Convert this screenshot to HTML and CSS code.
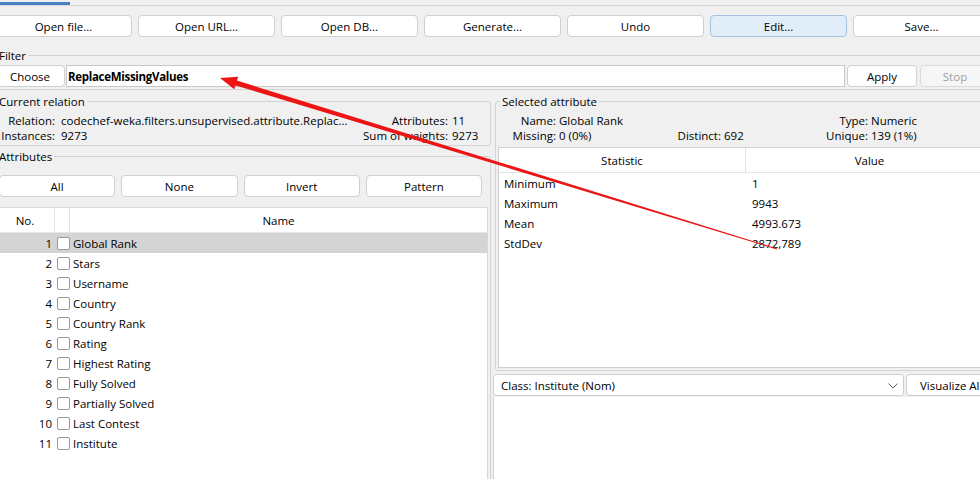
FILE: index.html
```html
<!DOCTYPE html>
<html>
<head>
<meta charset="utf-8">
<link rel="stylesheet" href="styles.css">
</head>
<body>
<div class="app">
  <div class="tabbar"><div class="tab-indicator"></div></div>
  <div class="toolbar">
    <button class="btn">Open file...</button>
    <button class="btn">Open URL...</button>
    <button class="btn">Open DB...</button>
    <button class="btn">Generate...</button>
    <button class="btn">Undo</button>
    <button class="btn btn-focus">Edit...</button>
    <button class="btn">Save...</button>
  </div>
  <fieldset class="group filter">
    <legend>Filter</legend>
    <div class="filter-row">
      <button class="btn choose">Choose</button>
      <div class="filter-field">ReplaceMissingValues</div>
      <button class="btn apply">Apply</button>
      <button class="btn stop">Stop</button>
    </div>
  </fieldset>
  <div class="main">
    <div class="left">
      <fieldset class="group relation">
        <legend>Current relation</legend>
        <div class="rel-grid">
          <span class="lbl">Relation:</span><span class="val">codechef-weka.filters.unsupervised.attribute.Replac...</span><span class="lbl">Attributes:</span><span class="val">11</span>
          <span class="lbl">Instances:</span><span class="val">9273</span><span class="lbl">Sum of weights:</span><span class="val">9273</span>
        </div>
      </fieldset>
      <fieldset class="group attributes">
        <legend>Attributes</legend>
        <div class="attr-buttons">
          <button class="btn">All</button>
          <button class="btn">None</button>
          <button class="btn">Invert</button>
          <button class="btn">Pattern</button>
        </div>
        <div class="attr-table">
          <div class="attr-head"><div class="h-no">No.</div><div class="h-chk"></div><div class="h-name">Name</div></div>
          <div class="attr-row selected"><div class="c-no">1</div><div class="c-chk"><span class="checkbox"></span></div><div class="c-name">Global Rank</div></div>
          <div class="attr-row"><div class="c-no">2</div><div class="c-chk"><span class="checkbox"></span></div><div class="c-name">Stars</div></div>
          <div class="attr-row"><div class="c-no">3</div><div class="c-chk"><span class="checkbox"></span></div><div class="c-name">Username</div></div>
          <div class="attr-row"><div class="c-no">4</div><div class="c-chk"><span class="checkbox"></span></div><div class="c-name">Country</div></div>
          <div class="attr-row"><div class="c-no">5</div><div class="c-chk"><span class="checkbox"></span></div><div class="c-name">Country Rank</div></div>
          <div class="attr-row"><div class="c-no">6</div><div class="c-chk"><span class="checkbox"></span></div><div class="c-name">Rating</div></div>
          <div class="attr-row"><div class="c-no">7</div><div class="c-chk"><span class="checkbox"></span></div><div class="c-name">Highest Rating</div></div>
          <div class="attr-row"><div class="c-no">8</div><div class="c-chk"><span class="checkbox"></span></div><div class="c-name">Fully Solved</div></div>
          <div class="attr-row"><div class="c-no">9</div><div class="c-chk"><span class="checkbox"></span></div><div class="c-name">Partially Solved</div></div>
          <div class="attr-row"><div class="c-no">10</div><div class="c-chk"><span class="checkbox"></span></div><div class="c-name">Last Contest</div></div>
          <div class="attr-row"><div class="c-no">11</div><div class="c-chk"><span class="checkbox"></span></div><div class="c-name">Institute</div></div>
        </div>
      </fieldset>
    </div>
    <div class="right">
      <fieldset class="group selected-attr">
        <legend>Selected attribute</legend>
        <div class="info-grid">
          <span class="lbl">Name:</span><span class="val">Global Rank</span><span class="lbl"></span><span class="val"></span><span class="lbl">Type:</span><span class="val">Numeric</span>
          <span class="lbl">Missing:</span><span class="val">0 (0%)</span><span class="lbl">Distinct:</span><span class="val">692</span><span class="lbl">Unique:</span><span class="val">139 (1%)</span>
        </div>
        <div class="stats-table">
          <div class="stats-head"><div>Statistic</div><div>Value</div></div>
          <div class="stats-row"><div>Minimum</div><div>1</div></div>
          <div class="stats-row"><div>Maximum</div><div>9943</div></div>
          <div class="stats-row"><div>Mean</div><div>4993.673</div></div>
          <div class="stats-row"><div>StdDev</div><div>2872,789</div></div>
        </div>
      </fieldset>
      <div class="class-row">
        <div class="combo">
          <span>Class: Institute (Nom)</span>
          <svg class="chevron" width="10" height="6" viewBox="0 0 10 6"><path d="M0.5 0.5 L5 5 L9.5 0.5" fill="none" stroke="#606060" stroke-width="1"/></svg>
        </div>
        <button class="btn visualize">Visualize All</button>
      </div>
      <div class="viz"></div>
    </div>
  </div>
</div>
<svg class="arrow" width="980" height="479" viewBox="0 0 980 479">
  <polygon points="220,78 238.2,76.8 237,80.6 777.15,248.5 776.85,249.5 235.5,85.4 234.3,89.2" fill="#ec1515"/>
</svg>
</body>
</html>
```

FILE: styles.css
```css
* { box-sizing: border-box; }
html, body {
  margin: 0;
  padding: 0;
  width: 980px;
  height: 479px;
  overflow: hidden;
  background: #f0f0f0;
}
body {
  position: relative;
  font-family: "Open Sans", "Noto Sans", sans-serif;
  font-size: 11.5px;
  color: #000;
}
.app {
  width: 1005px;
  margin-left: -10px;
}
.tabbar {
  height: 6px;
  padding-top: 2px;
  padding-left: 10px;
  border-bottom: 1px solid #d6d6d6;
}
.tab-indicator {
  width: 70px;
  height: 3px;
  background: #4a80c4;
}
.toolbar {
  display: flex;
  gap: 6px;
  padding: 9px 5px 0;
}
.btn {
  font: inherit;
  color: #000;
  background: #fff;
  border: 1px solid #d0d0d0;
  border-radius: 4px;
  height: 22px;
  padding: 0;
  line-height: 22px;
  text-align: center;
  white-space: nowrap;
  overflow: hidden;
}
.toolbar .btn { width: 137px; flex: none; }
.btn-focus { background: #e1edf8; border-color: #a6c3df; }

.group {
  border: 1px solid #d4d4d4;
  border-radius: 3px;
  margin: 0;
  padding: 0;
  min-width: 0;
}
.group > legend {
  padding: 2px 2px 0;
  margin-left: 2px;
  line-height: 16px;
}
.filter {
  margin-top: 9px;
  padding: 1px 4px 2px;
}
.filter-row {
  display: flex;
  height: 22px;
}
.choose { width: 70px; flex: none; }
.filter-field {
  width: 779px;
  flex: none;
  margin-left: 1px;
  height: 22px;
  background: #fff;
  border: 1px solid #c8c8c8;
  font-weight: bold;
  padding-left: 1px;
  line-height: 21px;
  letter-spacing: -0.3px;
  white-space: nowrap;
}
.apply { width: 70px; flex: none; margin-left: 2px; }
.stop {
  width: 70px;
  flex: none;
  margin-left: 3px;
  color: #a0a0a0;
  background: #f6f6f6;
  border-color: #dadada;
}

.main {
  display: flex;
  margin-top: 2px;
  height: 400px;
}
.left {
  width: 501px;
  flex: none;
  display: flex;
  flex-direction: column;
}
.right {
  width: 502px;
  flex: none;
  margin-left: 2px;
  display: flex;
  flex-direction: column;
}
.relation {
  padding: 2px 2px 2px 4px;
}
.rel-grid {
  display: grid;
  grid-template-columns: 60px 1fr auto 40px;
  line-height: 15px;
  padding-top: 1px;
  white-space: nowrap;
}
.rel-grid .lbl { text-align: right; }
.rel-grid .val { padding-left: 6px; }
.rel-grid .val:nth-child(4n) { padding-left: 4px; }

.attributes {
  flex: 1;
  margin-top: 1px;
  padding: 10px 2px 0 4px;
}
.attr-buttons {
  display: grid;
  grid-template-columns: repeat(4, 1fr);
  gap: 6px;
  margin: 0 6px 0 4px;
}
.attr-table {
  margin-top: 10px;
  height: 320px;
  background: #fff;
  border: 1px solid #d8d8d8;
}
.attr-head, .attr-row {
  display: grid;
  grid-template-columns: 59px 15px 1fr;
}
.attr-head {
  height: 25px;
  line-height: 26px;
  border-bottom: 1px solid #e6e6e6;
  text-align: center;
}
.h-no, .h-chk { border-right: 1px solid #e3e3e3; height: 24px; }
.attr-row {
  height: 20px;
  line-height: 22px;
}
.attr-row.selected { background: #d4d4d4; }
.c-no { text-align: right; padding-right: 3px; }
.c-chk { display: flex; align-items: center; height: 20px; }
.checkbox {
  display: block;
  width: 13px;
  height: 13px;
  margin-left: 2px;
  flex: none;
  background: #fff;
  border: 1px solid #9a9a9a;
  border-radius: 2px;
}
.c-name { padding-left: 3px; white-space: nowrap; }

.selected-attr {
  margin-left: 2px;
  padding: 2px 0 2px 2px;
}
.info-grid {
  display: grid;
  grid-template-columns: 58px 119px 46px 99px 48px 1fr;
  line-height: 15px;
  padding-top: 1px;
  white-space: nowrap;
}
.info-grid .lbl { text-align: right; }
.info-grid .val { padding-left: 3px; }
.stats-table {
  margin-top: 4px;
  height: 221px;
  background: #fff;
  border: 1px solid #cfcfcf;
}
.stats-head, .stats-row {
  display: grid;
  grid-template-columns: 247px 1fr;
}
.stats-head {
  height: 25px;
  line-height: 26px;
  text-align: center;
  border-bottom: 1px solid #e6e6e6;
}
.stats-head > div:first-child { border-right: 1px solid #e3e3e3; height: 24px; }
.stats-row {
  height: 20px;
  line-height: 22px;
}
.stats-row > div:first-child { padding-left: 5px; }
.stats-row > div:last-child { padding-left: 6px; }

.class-row {
  display: flex;
  height: 22px;
  margin-top: 3px;
}
.combo {
  width: 411px;
  flex: none;
  height: 22px;
  background: #fff;
  border: 1px solid #cfcfcf;
  border-radius: 3px;
  padding: 1px 5px 0 7px;
  display: flex;
  align-items: center;
  justify-content: space-between;
  white-space: nowrap;
}
.chevron { display: block; }
.visualize {
  width: 89px;
  flex: none;
  margin-left: 2px;
  text-align: left;
  padding-left: 13px;
}
.viz {
  flex: 1;
  margin-top: 1px;
  background: #fff;
  border-left: 1px solid #d0d0d0;
}
.arrow {
  position: absolute;
  left: 0;
  top: 0;
  pointer-events: none;
}
```
